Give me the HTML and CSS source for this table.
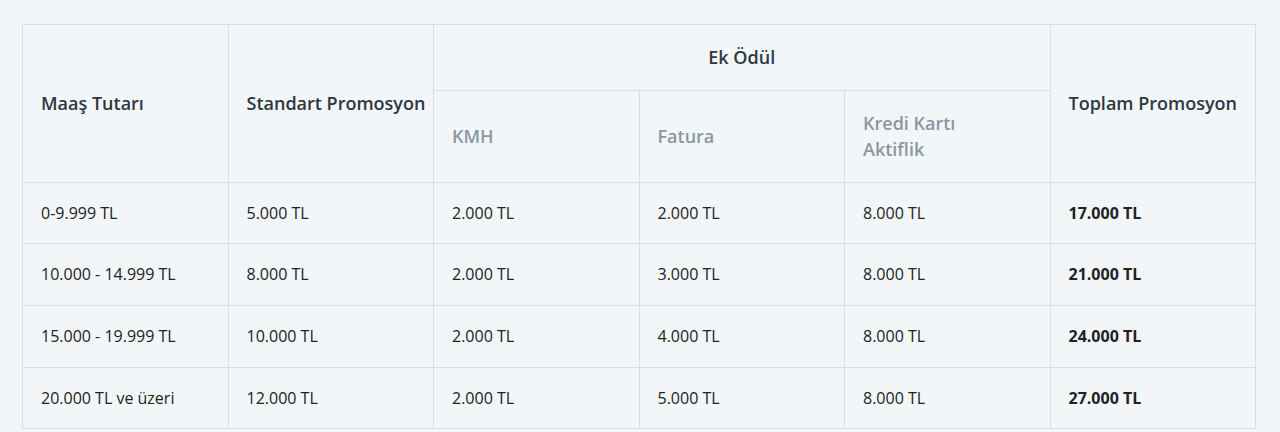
FILE: index.html
```html
<!DOCTYPE html>
<html lang="tr">
<head>
<meta charset="utf-8">
<title>Promosyon Tablosu</title>
<link rel="stylesheet" href="styles.css">
</head>
<body>
<div class="wrap">
  <table class="promo">
    <thead>
      <tr class="top">
        <th rowspan="2">Maaş Tutarı</th>
        <th rowspan="2">Standart Promosyon</th>
        <th colspan="3" class="center">Ek Ödül</th>
        <th rowspan="2">Toplam Promosyon</th>
      </tr>
      <tr class="sub">
        <th>KMH</th>
        <th>Fatura</th>
        <th>Kredi Kartı Aktiflik</th>
      </tr>
    </thead>
    <tbody>
      <tr><td>0-9.999 TL</td><td>5.000 TL</td><td>2.000 TL</td><td>2.000 TL</td><td>8.000 TL</td><td class="total">17.000 TL</td></tr>
      <tr><td>10.000 - 14.999 TL</td><td>8.000 TL</td><td>2.000 TL</td><td>3.000 TL</td><td>8.000 TL</td><td class="total">21.000 TL</td></tr>
      <tr><td>15.000 - 19.999 TL</td><td>10.000 TL</td><td>2.000 TL</td><td>4.000 TL</td><td>8.000 TL</td><td class="total">24.000 TL</td></tr>
      <tr><td>20.000 TL ve üzeri</td><td>12.000 TL</td><td>2.000 TL</td><td>5.000 TL</td><td>8.000 TL</td><td class="total">27.000 TL</td></tr>
    </tbody>
  </table>
</div>
</body>
</html>
```
FILE: styles.css
```css
html, body {
  margin: 0;
  padding: 0;
  background: #f2f6f9;
}
body {
  font-family: "Open Sans", "Noto Sans", sans-serif;
  color: #222;
}
.wrap {
  padding: 24px 24px 0 22px;
}
.promo {
  width: 100%;
  border-collapse: collapse;
  table-layout: fixed;
  background: #f2f6f9;
}
.promo th,
.promo td {
  border: 1px solid #d9dee3;
  text-align: left;
  vertical-align: middle;
  padding: 19px 18px;
}
.promo th {
  font-size: 18px;
  font-weight: 600;
  line-height: 26.5px;
  color: #2e3740;
}
.promo .top th {
  white-space: nowrap;
}
.promo th.center {
  text-align: center;
}
.promo .sub th {
  color: #8a97a2;
  padding-right: 60px;
}
.promo td {
  font-size: 16px;
  line-height: 24.7px;
  padding: 18px 18px;
}
.promo td.total {
  font-weight: 700;
}
```
